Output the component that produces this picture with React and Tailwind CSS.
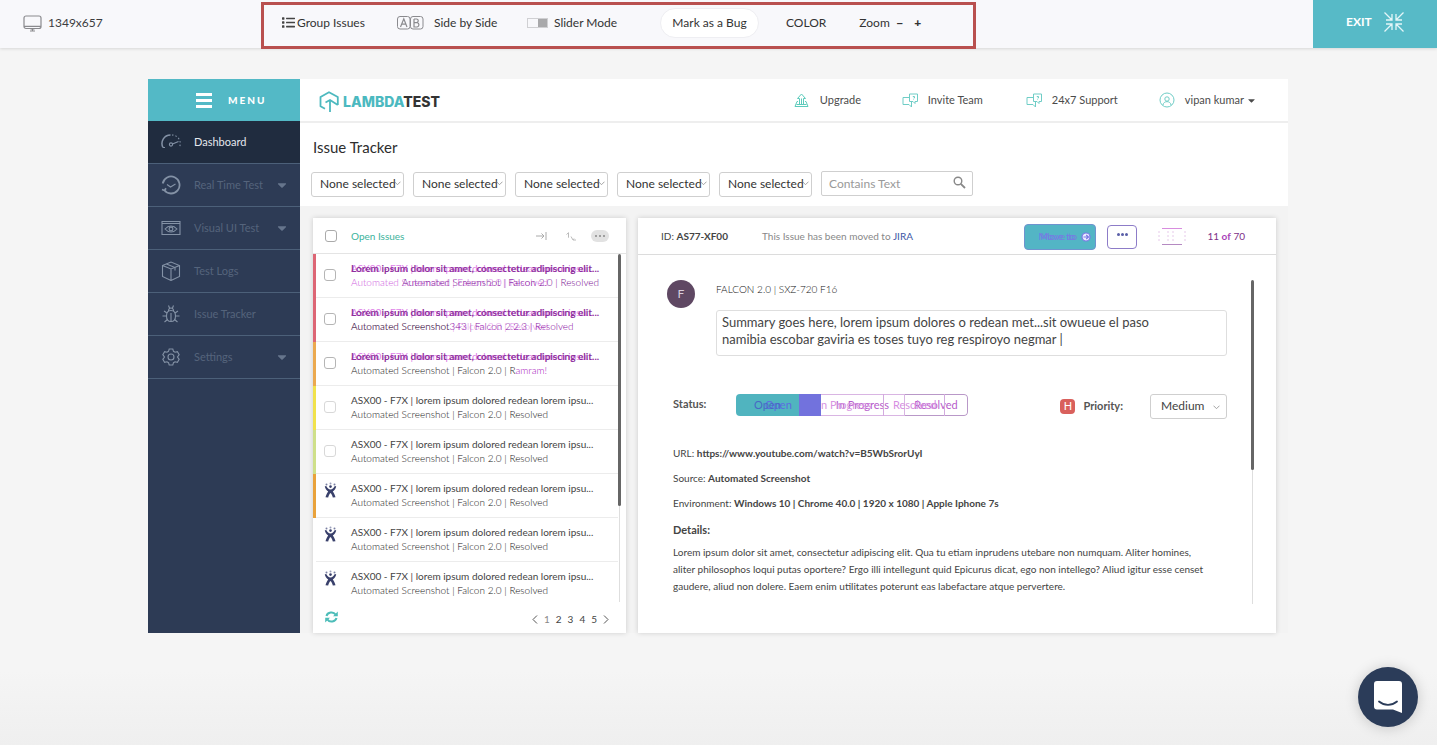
import React from "react";
import { FaList, FaCaretDown } from "react-icons/fa";

const FONT = "font-['Lato','Liberation_Sans',sans-serif]";

function Monitor() {
  return (
    <svg width="19" height="17" viewBox="0 0 19 17" fill="none" stroke="#8a8a8e" strokeWidth="1.2">
      <rect x="1" y="1" width="17" height="12.5" rx="2" />
      <path d="M1 11.3h17M7.500 14h4M7 16h5M9.500 13.500v3" />
    </svg>
  );
}

function AbIcon() {
  return (
    <svg width="27" height="14" viewBox="0 0 27 14" fill="none" stroke="#8a8a8e" strokeWidth="1">
      <rect x="0.5" y="0.5" width="12.5" height="12.5" rx="2.5" />
      <rect x="13.5" y="0.5" width="12.5" height="12.5" rx="2.5" />
      <path strokeWidth="1.2" d="M3.5 11 6.8 2.8 10 11M4.6 8.2h4.4M17 3v8h3.2a2.2 2.2 0 0 0 0-4.3H17M17 3h2.8a1.9 1.9 0 0 1 0 3.7" />
    </svg>
  );
}

function ExitIcon() {
  return (
    <svg width="20" height="20" viewBox="0 0 20 20" fill="none" stroke="#e4f6f8" strokeWidth="1.3">
      <path d="M.5.5 8 8M8 2v6H2M19.5.5 12 8M12 2v6h6M.5 19.5 8 12M8 18v-6H2M19.5 19.5 12 12M12 18v-6h6" />
    </svg>
  );
}

function LogoMark() {
  return (
    <svg width="21" height="22" viewBox="0 0 21 22" fill="none" stroke="#4db9bf" strokeWidth="1.8" strokeLinejoin="round">
      <path d="M6 17.800 1.500 15.300V6l8.500-4.800L18.800 6v8" />
      <path d="M6.500 11.500 11 9l7.800 5M11 9v12" />
    </svg>
  );
}

const navIcons = {
  gauge: (
    <>
      <path strokeWidth="1.500" d="M2 15.500A8.500 8.500 0 0 1 9.500 3" />
      <path strokeDasharray="1.500 2" d="M11 3a8.500 8.500 0 0 1 7.500 12" />
      <circle cx="10" cy="12.500" r="1.600" />
      <path d="M11.500 12 17.500 9.500M2 15.500h2" />
    </>
  ),
  clock: (
    <>
      <path strokeWidth="1.800" d="M3.200 15A8.500 8.500 0 1 0 1.700 8.500M1 14.500l2.500 1 1.500-2.300" />
      <path d="m6 9.500 3.500 2.500 5-3" />
    </>
  ),
  eye: (
    <>
      <path d="M1 3.500h18v13H1zM1 5.500h18" />
      <path d="M4 11c3.500-4 8.500-4 12 0-3.500 4-8.500 4-12 0z" />
      <circle cx="10" cy="11" r="1.900" />
    </>
  ),
  box: (
    <>
      <path d="M1.500 4.500 10 1l8.500 3.500v11L10 19.500 1.500 15.500zM1.500 4.500 10 8l8.500-3.500M10 8v11.500" />
      <path d="m5.500 3 8.500 3.500v3" />
    </>
  ),
  bug: (
    <>
      <path d="M10 6.500c3 0 4.500 2 4.500 5.500S13 17.500 10 17.500 5.500 15.500 5.500 12 7 6.500 10 6.500zM10 9v8" />
      <path d="M7.500 7c0-4 5-4 5 0M8.500 4 7.500 1.500M11.500 4l1-2.500M5.500 12H1.500M14.500 12h4M6 9 3 7M14 9l3-2M6.500 15.500 3.500 18M13.500 15.500l3 2.500" />
    </>
  ),
  gear: (
    <>
      <circle cx="10" cy="10" r="3" />
      <path d="M8.200 2h3.600l.7 2.300 1.500.9 2.400-.6 1.800 3.100L16.500 10l1.700 2.300-1.800 3.100-2.400-.6-1.500.9-.7 2.300H8.200l-.7-2.300-1.500-.9-2.400.6-1.800-3.100L3.500 10 1.800 7.700l1.800-3.100 2.400.6 1.500-.9z" />
    </>
  ),
};

const nav = [
  { label: "Dashboard", icon: "gauge", active: true },
  { label: "Real Time Test", icon: "clock", caret: true },
  { label: "Visual UI Test", icon: "eye", caret: true },
  { label: "Test Logs", icon: "box" },
  { label: "Issue Tracker", icon: "bug" },
  { label: "Settings", icon: "gear", caret: true },
];

function Toolbar() {
  return (
    <header className="flex h-12 justify-between bg-[#f8f8fb] shadow-[0_1px_3px_rgba(0,0,0,0.12)]">
      <div className="flex">
        <div className="flex w-[261px] items-center gap-[6px] pb-[2px] pl-[23px] text-[12px] text-[#3c3c3f]">
          <Monitor />
          <span>1349x657</span>
        </div>
        <div className="mt-[2px] flex h-[47px] w-[715px] items-center border-[3px] border-[#b9504f] pb-[6px] pl-[18px] text-[12px] text-[#333]">
          <button className="flex w-[115px] items-center gap-[2px]">
            <FaList size={13} color="#444" />
            Group Issues
          </button>
          <button className="flex w-[130px] items-center gap-[10px]">
            <AbIcon />
            Side by Side
          </button>
          <button className="flex w-[133px] items-center gap-[6px]">
            <span className="flex h-[10px] w-[21px] justify-end border border-[#d0d0d3]">
              <span className="w-[9px] bg-[#a9a9ab]" />
            </span>
            Slider Mode
          </button>
          <button className="h-[30px] w-[99px] rounded-full border border-[#eeeef2] bg-white">Mark as a Bug</button>
          <button className="ml-[27px]">COLOR</button>
          <div className="ml-[33px] flex items-center gap-[6px]">
            <span>Zoom</span>
            <button aria-label="Zoom out" className="w-2 text-center font-black">−</button>
            <button aria-label="Zoom in" className="ml-[2px] w-3 text-center font-black">+</button>
          </div>
        </div>
      </div>
      <button className="flex w-[124px] items-center gap-3 bg-[#57bac7] pb-1 pl-[33px] text-[12px] font-bold text-white">
        EXIT
        <ExitIcon />
      </button>
    </header>
  );
}

function Sidebar() {
  return (
    <aside className="w-[152px] shrink-0 bg-[#2d3b55]">
      <button className="flex h-[42px] w-full items-center gap-4 bg-[#53b9c6] pl-12 text-[10px] font-black tracking-[2px] text-white">
        <span className="flex w-4 flex-col gap-[3px]">
          <span className="h-[3px] bg-white" />
          <span className="h-[3px] bg-white" />
          <span className="h-[3px] bg-white" />
        </span>
        MENU
      </button>
      <nav>
        {nav.map((n) => (
          <a
            key={n.label}
            href="#"
            className={
              "flex h-[43px] items-center border-b border-[#4c6079] pl-[13px] text-[11px] " +
              (n.active ? "bg-[#202c3f] text-[#e4e8ee]" : "text-[#55647c]")
            }
          >
            <svg width="20" height="20" viewBox="0 0 20 20" fill="none" stroke="#8492a6" strokeWidth="1.1">
              {navIcons[n.icon]}
            </svg>
            <span className="ml-[13px] flex-1">{n.label}</span>
            {n.caret && <FaCaretDown size={14} className="mr-[11px]" color="#66758c" />}
          </a>
        ))}
      </nav>
    </aside>
  );
}

function ChatIcon() {
  return (
    <svg width="17" height="15" viewBox="0 0 17 15" fill="none" stroke="#6fcdc6" strokeWidth="1">
      <path d="M7.500 1h8v7.500h-2.500v2l-2-2H7.500z" />
      <path d="M7.500 4.500H1v7h6l2.500 2.500v-5.500M10.800 3.500h1.700v1.500h-1M11.500 6.500v.5" />
    </svg>
  );
}

function TopBar() {
  return (
    <div className="flex h-[44px] items-center justify-between border-b-2 border-[#eeeeee] pr-[31px] pl-[19px]">
      <div className="flex items-center gap-[3px] pt-[3px]">
        <LogoMark />
        <span className="font-['Inter','Liberation_Sans',sans-serif] text-[14px] font-extrabold text-[#333]">
          <span className="text-[#4bb9c0]">LAMBDA</span>TEST
        </span>
      </div>
      <div className="flex items-center text-[11px] text-[#4b4b4b]">
        <a href="#" className="flex w-[108px] items-center gap-[11px]">
          <svg width="15" height="15" viewBox="0 0 15 15" fill="none" stroke="#5ccbbb" strokeWidth="1">
            <path d="M7.500 1 11.500 5.500H9.500v6H5.500v-6H3.500zM4 8.500H3L1 13.500h13l-2-5h-1M7.500 5.500v6M2.500 11.500h10" />
          </svg>
          Upgrade
        </a>
        <a href="#" className="flex w-[124px] items-center gap-[9px]">
          <ChatIcon />
          Invite Team
        </a>
        <a href="#" className="flex w-[133px] items-center gap-[9px]">
          <ChatIcon />
          24x7 Support
        </a>
        <button className="flex items-center gap-[10px]">
          <svg width="16" height="16" viewBox="0 0 16 16" fill="none" stroke="#6fcdc6" strokeWidth="1">
            <circle cx="8" cy="8" r="7" />
            <circle cx="8" cy="7" r="2.200" />
            <path d="M4 13c.5-4.500 7.500-4.500 8 0" />
          </svg>
          <span className="flex items-center gap-[2px]">
            vipan kumar
            <FaCaretDown size={11} />
          </span>
        </button>
      </div>
    </div>
  );
}

function Chevron({ className }) {
  return (
    <svg className={className} width="7" height="5" viewBox="0 0 7 5" fill="none" stroke="#999" strokeWidth="0.900">
      <path d="M.5.700 3.500 3.700 6.500.700" />
    </svg>
  );
}

function Filters() {
  return (
    <div className="px-[11px] pt-[14px] pb-[9px]">
      <h1 className="pl-[2px] text-[15px] leading-[20px] text-[#2d2d2d]">Issue Tracker</h1>
      <div className="mt-[13px] flex gap-[9px]">
        {[1, 2, 3, 4, 5].map((i) => (
          <div key={i} className="relative w-[93px]">
            <select
              aria-label={"Filter " + i}
              className="h-[25px] w-full appearance-none rounded-[3px] border border-[#cfcfcf] bg-white pl-2 text-[12px] text-[#333]"
            >
              <option>None selected</option>
            </select>
            <Chevron className="pointer-events-none absolute top-[11px] right-[3px]" />
          </div>
        ))}
        <div className="relative w-[152px]">
          <input
            type="text"
            aria-label="Contains Text"
            placeholder="Contains Text"
            className="h-[25px] w-full rounded-[2px] border border-[#cfcfcf] bg-white pr-7 pl-[7px] text-[12px] placeholder:text-[#999]"
          />
          <svg className="absolute top-[6px] right-[7px]" width="13" height="13" viewBox="0 0 13 13" fill="none" stroke="#888">
            <circle cx="5" cy="5" r="3.800" strokeWidth="1.400" />
            <path strokeWidth="1.800" d="m7.800 7.800 4.200 4.200" />
          </svg>
        </div>
      </div>
    </div>
  );
}

const LOREM = "Lorem ipsum dolor sit amet, consectetur adipiscing elit...";
const ASX = "ASX00 - F7X | lorem ipsum dolored redean lorem ipsu...";
const AUTO = "Automated Screenshot | Falcon 2.0 | Resolved";

const rows = [
  { bar: "border-[#dd6675]", diff: 1 },
  { bar: "border-[#dd6675]", diff: 2 },
  { bar: "border-[#eba94f]", diff: 3 },
  { bar: "border-[#f1e24c]", faint: true },
  { bar: "border-[#cfe08a]", faint: true },
  { bar: "border-[#e9a23b]", jira: true },
  { bar: "border-transparent", jira: true },
  { bar: "border-transparent", jira: true },
];

function JiraMark() {
  return (
    <svg width="13" height="16" viewBox="0 0 13 16" fill="#39406b">
      <circle cx="2.500" cy="2.400" r="1" fill="#7a80a3" />
      <circle cx="6.500" cy="1.400" r="1" fill="#9a9fba" />
      <circle cx="10.500" cy="2.400" r="1" fill="#7a80a3" />
      <circle cx="6.500" cy="4.600" r="1.300" />
      <path d="M.8 4 2.800 4.400C3.300 6 4.600 7.400 6.500 7.400S9.700 6 10.200 4.400L12.200 4C12 6.800 10.500 8.300 8.800 9.400 10 11 11 13 11.500 15.200L8.800 15.600C8.500 13.500 7.500 12 6.500 11 5.500 12 4.500 13.500 4.200 15.600L1.500 15.200C2 13 3 11 4.200 9.400 2.500 8.300 1 6.800.8 4z" />
    </svg>
  );
}

function RowText({ diff }) {
  if (!diff) {
    return (
      <div className="whitespace-nowrap">
        <div className="text-[10px] leading-[14px] text-[#444]">{ASX}</div>
        <div className="text-[10px] leading-[14px] font-light text-[#222]">{AUTO}</div>
      </div>
    );
  }
  return (
    <div className="whitespace-nowrap">
      <div className="relative text-[10px] leading-[14px] font-bold text-[#8d2f9c]">
        <span aria-hidden="true" className="absolute top-0 left-0 font-normal text-[#de7fe8]">{ASX}</span>
        <span className="relative">{LOREM}</span>
      </div>
      {diff === 1 && (
        <div className="relative text-[10px] leading-[14px] font-light text-[#7a0f94]">
          <span aria-hidden="true" className="absolute top-0 left-0 text-[#cf5fe0]">{AUTO}</span>
          <span className="relative ml-[51px]">{AUTO}</span>
        </div>
      )}
      {diff === 2 && (
        <div className="relative text-[10px] leading-[14px] font-light text-[#8a10a3]">
          <span aria-hidden="true" className="absolute top-0 left-0 text-[#dc86e8]">{AUTO}</span>
          <span className="relative text-[#222]">Automated Screenshot</span>
          <span className="relative">343 | Falcon 2.2.3 | Resolved</span>
        </div>
      )}
      {diff === 3 && (
        <div className="relative text-[10px] leading-[14px] font-light text-[#a820be]">
          <span className="text-[#222]">Automated Screenshot | Falcon 2.0 | R</span>amram!
        </div>
      )}
    </div>
  );
}

function IssueList() {
  return (
    <section className="flex w-[313px] shrink-0 flex-col bg-white shadow-[0_0_5px_rgba(0,0,0,0.16)]">
      <div className="flex h-9 items-center border-b border-[#e4e4e4] pt-[2px] pl-3">
        <input type="checkbox" aria-label="Select all issues" className="h-3 w-3 appearance-none rounded-[3px] border border-[#aaa]" />
        <span className="ml-[14px] flex-1 text-[10px] text-[#3cb39c]">Open Issues</span>
        <button aria-label="Collapse" className="mr-[19px]">
          <svg width="11" height="8" viewBox="0 0 11 8" fill="none" stroke="#aaa">
            <path d="M0 4h8M5.500 1.500 8 4 5.500 6.500M10 0v8" />
          </svg>
        </button>
        <button aria-label="Sort" className="mr-[15px]">
          <svg width="10" height="9" viewBox="0 0 10 9" fill="none" stroke="#bbb">
            <path d="M.5 2.500 2.500.700v5M5 4.500l2 3.500 1-1.500M7 8h3" />
          </svg>
        </button>
        <button aria-label="More" className="mr-[17px] flex h-3 w-[18px] items-center justify-center gap-[2px] rounded-full bg-[#e2e2e2]">
          <span className="h-[2px] w-[2px] rounded-full bg-[#888]" />
          <span className="h-[2px] w-[2px] rounded-full bg-[#888]" />
          <span className="h-[2px] w-[2px] rounded-full bg-[#888]" />
        </button>
      </div>
      <div className="flex">
        <ul className="flex-1">
          {rows.map((r, i) => (
            <li key={i} className={"flex h-11 items-center border-l-[3px] " + r.bar}>
              <div className={"flex h-full flex-1 items-center border-b " + (i < 7 ? "border-[#ececec]" : "border-transparent")}>
                <div className="flex w-[35px] pl-2">
                  {r.jira ? (
                    <span className="pb-[10px]"><JiraMark /></span>
                  ) : (
                    <input
                      type="checkbox"
                      aria-label={"Select issue " + (i + 1)}
                      className={"h-3 w-3 appearance-none rounded-[3px] border " + (r.faint ? "border-[#d8d8d8]" : "border-[#b5b5b5]")}
                    />
                  )}
                </div>
                <RowText diff={r.diff} />
              </div>
            </li>
          ))}
        </ul>
        <div className="mr-[5px] mb-1 flex w-[3px] flex-col items-center">
          <span className="h-[252px] w-full rounded-full bg-[#666]" />
          <span className="w-px flex-1 bg-[#dedede]" />
        </div>
      </div>
      <div className="flex h-[27px] items-center justify-between pr-[17px] pl-3">
        <button aria-label="Refresh" className="pb-1">
          <svg width="13" height="12" viewBox="0 0 13 12" fill="none" stroke="#4dbdb9" strokeWidth="2">
            <path d="M1.500 5C2.500 1 8.500.2 10.500 3.500M11.500 7C10.500 11 4.500 11.800 2.500 8.500" />
            <path fill="#4dbdb9" stroke="none" d="M12.800.5v4.700H8zM.2 11.500V6.800H5z" />
          </svg>
        </button>
        <div className="flex items-center gap-[6px] text-[10px] text-[#444]">
          <button aria-label="Previous page">
            <svg width="6" height="9" viewBox="0 0 6 9" fill="none" stroke="#555"><path d="M5 .5 1 4.500 5 8.500" /></svg>
          </button>
          <button className="text-[#888]">1</button>
          <button>2</button>
          <button>3</button>
          <button>4</button>
          <button>5</button>
          <button aria-label="Next page">
            <svg width="6" height="9" viewBox="0 0 6 9" fill="none" stroke="#555"><path d="M1 .5 5 4.500 1 8.500" /></svg>
          </button>
        </div>
      </div>
    </section>
  );
}

function StatusGroup() {
  return (
    <div className="relative flex h-[22px] w-[232px] overflow-hidden rounded-[4px] bg-[linear-gradient(90deg,#50b4bf_63px,#7272dd_63px,#7272dd_85px,#fff_85px)] text-[11px] leading-[22px] text-[#b65ccb]">
      <button className="w-[85px] pl-[29px] text-left text-[#5d6be0]">Open</button>
      <button className="w-[84px] border-y border-r border-[#d9b5e3] text-center leading-[20px]">In Progress</button>
      <button className="flex-1 rounded-r-[4px] border border-l-0 border-[#b998c8] text-center leading-[20px]">Resolved</button>
      <span aria-hidden="true" className="absolute top-0 left-[18px] text-[#4768c5]">Open</span>
      <span aria-hidden="true" className="absolute top-0 left-[85px] text-[#d795e2]">n Progress</span>
      <span aria-hidden="true" className="absolute top-0 left-[147px] h-full w-px bg-[#d3abdf]" />
      <span aria-hidden="true" className="absolute top-0 left-[157px] text-[#d68fe2]">Resolved</span>
      <span aria-hidden="true" className="absolute top-0 left-[208px] h-full w-px bg-[#d3abdf]" />
    </div>
  );
}

function Detail() {
  return (
    <section className="flex min-w-0 flex-1 flex-col bg-white shadow-[0_0_5px_rgba(0,0,0,0.16)]">
      <div className="flex h-[37px] items-center border-b border-[#dcdcdc] pt-[2px] pr-[31px] pl-[23px] text-[10px] text-[#444]">
        <span className="w-[101px]">ID: <b>AS77-XF00</b></span>
        <span className="flex-1 text-[#888]">This Issue has been moved to <a href="#" className="text-[#3d57a5]">JIRA</a></span>
        <button className="relative flex h-[26px] w-[72px] items-center rounded-[4px] border border-[#6f93cf] bg-[#53b5c5] pl-[13px] text-[#7b77e6]">
          <span aria-hidden="true" className="absolute left-[15px] text-[#6c86dd]">Move to</span>
          <span className="relative">Move to</span>
          <svg className="ml-[6px]" width="10" height="10" viewBox="0 0 10 10" fill="none" stroke="#7b77e6" strokeWidth="1.200">
            <circle cx="5" cy="5" r="4" fill="#e9ecff" />
            <path d="M2.500 5h5M5.200 3 7.500 5 5.200 7" />
          </svg>
        </button>
        <button aria-label="More actions" className="mr-[20px] ml-[11px] flex h-6 w-[30px] items-center justify-center gap-px rounded-[4px] border border-[#8d7cc8] pb-1">
          <span className="h-[3px] w-[3px] rounded-full bg-[#5a5fa8]" />
          <span className="h-[3px] w-[3px] rounded-full bg-[#5a5fa8]" />
          <span className="h-[3px] w-[3px] rounded-full bg-[#5a5fa8]" />
        </button>
        <svg width="30" height="17" viewBox="0 0 30 17" fill="none" stroke="#d88ddf">
          <path d="M5 .5h20" />
          <path stroke="#b58ac2" d="M5 16.500h20" />
          <path stroke="#e6c9ea" strokeDasharray="2 2" d="M2 3v11M28 3v11M11 3v11M16 3v11" />
        </svg>
        <span className="ml-5 text-[#7e2f88]">11 <b className="text-[#a93fb8]">of</b> 70</span>
      </div>
      <div className="flex flex-1 pt-[25px] pr-[22px] pb-[29px] pl-[29px]">
        <div className="min-w-0 flex-1 pr-6">
          <div className="flex">
            <div className="flex h-7 w-7 items-center justify-center rounded-full bg-[#5f4863] text-[12px] text-[#d8cddb]">F</div>
            <div className="ml-[21px] flex-1">
              <div className="pt-[2px] text-[10px] leading-[14px] font-light text-[#111]">FALCON 2.0 | SXZ-720 F16</div>
              <textarea
                aria-label="Summary"
                className="mt-[14px] block h-[46px] w-full resize-none rounded-[3px] border border-[#dedede] px-[5px] py-[3px] text-[13px] leading-[17px] text-[#444]"
                defaultValue={"Summary goes here, lorem ipsum dolores o redean met...sit owueue el paso\nnamibia escobar gaviria es toses tuyo reg respiroyo negmar |"}
              />
            </div>
          </div>
          <div className="mt-[38px] flex items-start justify-between pl-[6px]">
            <div className="flex items-center">
              <span className="w-[63px] text-[11px] font-bold text-[#555]">Status:</span>
              <StatusGroup />
            </div>
            <div className="flex items-center text-[11px] font-bold text-[#555]">
              <span className="flex h-[15px] w-[15px] items-center justify-center rounded-[4px] bg-[#d9605c] font-normal text-white">H</span>
              <label htmlFor="priority" className="mr-[27px] ml-2">Priority:</label>
              <div className="relative w-[77px]">
                <select id="priority" className="h-[25px] w-full appearance-none rounded-[3px] border border-[#cfcfcf] bg-white pl-[10px] text-[12px] font-normal text-[#444]">
                  <option>Medium</option>
                </select>
                <Chevron className="pointer-events-none absolute top-[11px] right-[7px]" />
              </div>
            </div>
          </div>
          <div className="mt-[26px] pl-[6px] text-[10px] leading-[17px] text-[#444]">
            <p>URL: <b>https://www.youtube.com/watch?v=B5WbSrorUyI</b></p>
            <p className="mt-2">Source: <b>Automated Screenshot</b></p>
            <p className="mt-2">Environment: <b>Windows 10 | Chrome 40.0 | 1920 x 1080 | Apple Iphone 7s</b></p>
            <h2 className="mt-[9px] text-[11px] font-bold">Details:</h2>
            <p className="mt-[6px]">
              Lorem ipsum dolor sit amet, consectetur adipiscing elit. Qua tu etiam inprudens utebare non numquam. Aliter homines,
              <br />
              aliter philosophos loqui putas oportere? Ergo illi intellegunt quid Epicurus dicat, ego non intellego? Aliud igitur esse censet
              <br />
              gaudere, aliud non dolere. Eaem enim utilitates poterunt eas labefactare atque pervertere.
            </p>
          </div>
        </div>
        <div className="flex w-[3px] flex-col items-center">
          <span className="h-[190px] w-full rounded-full bg-[#666]" />
          <span className="w-px flex-1 bg-[#dedede]" />
        </div>
      </div>
    </section>
  );
}

export default function App() {
  return (
    <div className={"min-h-screen bg-[linear-gradient(#f5f5f5_90%,#efefef)] " + FONT}>
      <Toolbar />
      <main className="mt-[31px] mr-[149px] ml-[148px] flex">
        <Sidebar />
        <div className="min-w-0 flex-1 bg-[#f3f3f3]">
          <div className="bg-white">
            <TopBar />
            <Filters />
          </div>
          <div className="flex gap-3 pt-3 pr-3 pl-[13px]">
            <IssueList />
            <Detail />
          </div>
        </div>
      </main>
      <button
        aria-label="Open chat"
        className="fixed right-[19px] bottom-[18px] flex h-[60px] w-[60px] items-center justify-center rounded-full bg-[#2b3c59] shadow-[0_1px_14px_rgba(0,0,0,0.18)]"
      >
        <svg width="28" height="32" viewBox="0 0 28 32" fill="none">
          <path fill="#fff" d="M3 0h22a3 3 0 0 1 3 3v29l-9-3.500H3a3 3 0 0 1-3-3V3a3 3 0 0 1 3-3z" />
          <path stroke="#2b3c59" strokeWidth="1.800" strokeLinecap="round" d="M5 20.500c5.500 4.500 12.500 4.500 18 0" />
        </svg>
      </button>
    </div>
  );
}
